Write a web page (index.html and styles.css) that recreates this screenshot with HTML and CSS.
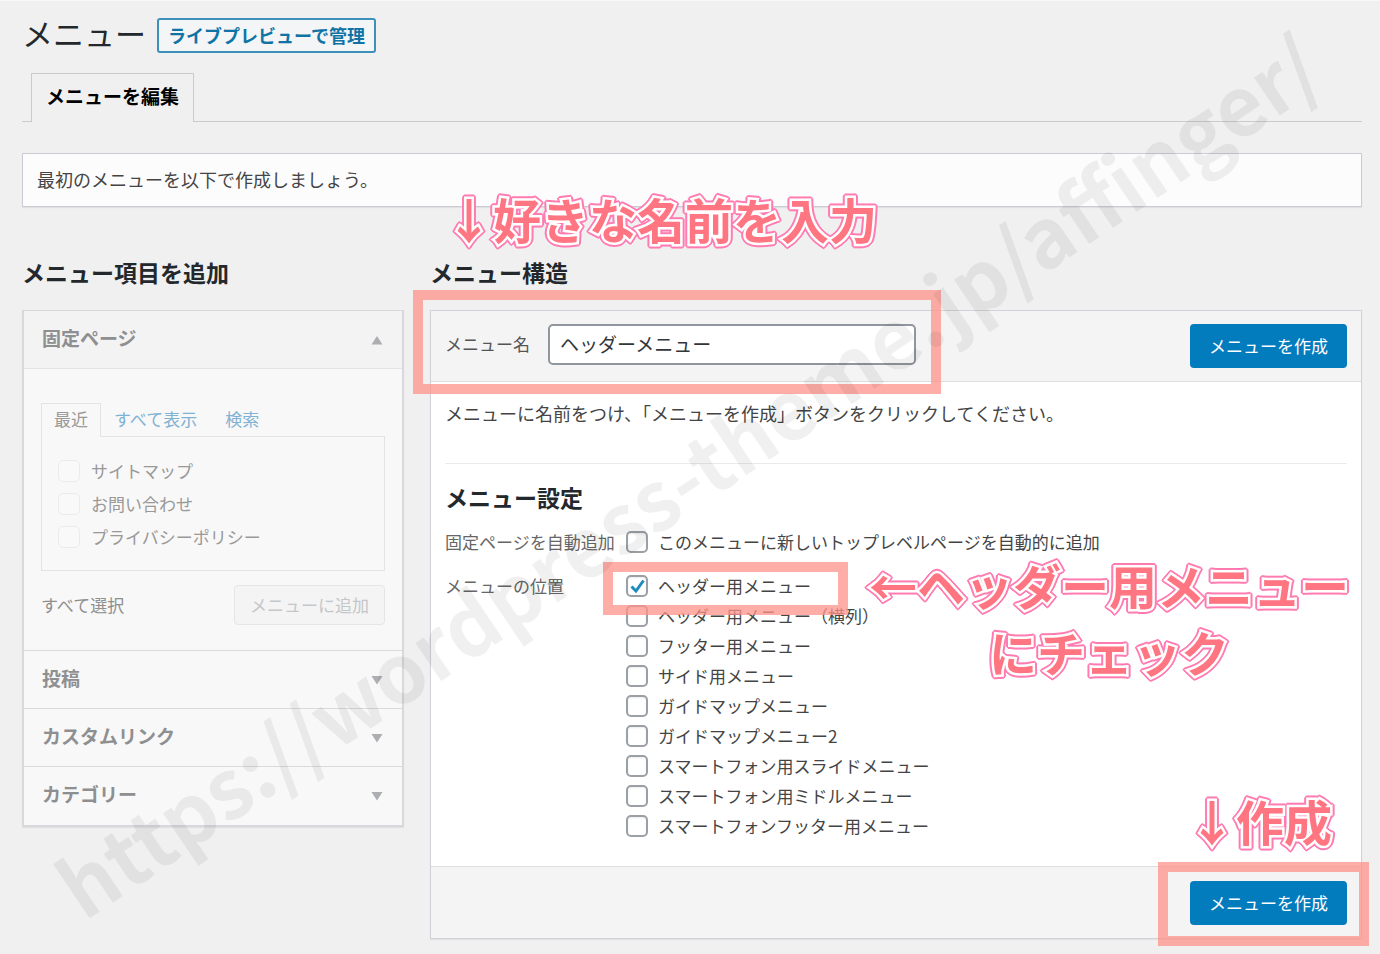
FILE: index.html
```html
<!DOCTYPE html>
<html lang="ja">
<head>
<meta charset="utf-8">
<meta name="viewport" content="width=device-width, initial-scale=1">
<title>メニュー</title>
<link rel="stylesheet" href="styles.css">
</head>
<body>
<div class="page">
  <header class="page-head">
    <h1 class="page-title">メニュー</h1>
    <a class="preview-link" href="#">ライブプレビューで管理</a>
  </header>
  <nav class="tabs"><a class="tab" href="#">メニューを編集</a></nav>
  <p class="notice">最初のメニューを以下で作成しましょう。</p>

  <div class="columns">
    <aside class="sidebar">
      <h2 class="heading">メニュー項目を追加</h2>
      <div class="accordion">
        <section class="group">
          <h3><button class="group-head open" type="button">固定ページ<svg class="caret" viewBox="0 0 12 10"><path d="M6 1 L11.5 9.5 H.5 Z"/></svg></button></h3>
          <div class="group-body">
            <div class="subtabs">
              <a class="subtab current" href="#">最近</a>
              <a class="subtab" href="#">すべて表示</a>
              <a class="subtab" href="#">検索</a>
            </div>
            <div class="subpanel">
              <label class="item"><input class="check" type="checkbox" disabled>サイトマップ</label>
              <label class="item"><input class="check" type="checkbox" disabled>お問い合わせ</label>
              <label class="item"><input class="check" type="checkbox" disabled>プライバシーポリシー</label>
            </div>
            <div class="group-actions">
              <a class="select-all" href="#">すべて選択</a>
              <button class="add" type="button" disabled>メニューに追加</button>
            </div>
          </div>
        </section>
        <section class="group"><h3><button class="group-head" type="button">投稿<svg class="caret" viewBox="0 0 12 10"><path d="M6 9.5 L11.5 1 H.5 Z"/></svg></button></h3></section>
        <section class="group"><h3><button class="group-head" type="button">カスタムリンク<svg class="caret" viewBox="0 0 12 10"><path d="M6 9.5 L11.5 1 H.5 Z"/></svg></button></h3></section>
        <section class="group"><h3><button class="group-head" type="button">カテゴリー<svg class="caret" viewBox="0 0 12 10"><path d="M6 9.5 L11.5 1 H.5 Z"/></svg></button></h3></section>
      </div>
    </aside>

    <main class="main">
      <h2 class="heading">メニュー構造</h2>
      <form class="editor">
        <div class="editor-head">
          <label class="name-label" for="menu-name">メニュー名</label>
          <input class="name-input" id="menu-name" type="text" value="ヘッダーメニュー">
          <button class="create" type="button">メニューを作成</button>
          <span class="frame frame-name"></span>
          <span class="callout callout-name">↓好きな名前を入力</span>
        </div>
        <div class="editor-body">
          <p class="lead">メニューに名前をつけ、「メニューを作成」ボタンをクリックしてください。</p>
          <h2 class="heading settings-title">メニュー設定</h2>
          <div class="setting">
            <span class="setting-name">固定ページを自動追加</span>
            <div class="options">
              <label class="option"><input class="check" type="checkbox">このメニューに新しいトップレベルページを自動的に追加</label>
            </div>
          </div>
          <div class="setting">
            <span class="setting-name">メニューの位置</span>
            <div class="options">
              <label class="option"><input class="check" type="checkbox" checked><svg class="tick" viewBox="0 0 22 22"><path d="M5.5 11.5 L10 16 L17.5 5.5"/></svg>ヘッダー用メニュー</label>
              <label class="option"><input class="check" type="checkbox">ヘッダー用メニュー（横列）</label>
              <label class="option"><input class="check" type="checkbox">フッター用メニュー</label>
              <label class="option"><input class="check" type="checkbox">サイド用メニュー</label>
              <label class="option"><input class="check" type="checkbox">ガイドマップメニュー</label>
              <label class="option"><input class="check" type="checkbox">ガイドマップメニュー2</label>
              <label class="option"><input class="check" type="checkbox">スマートフォン用スライドメニュー</label>
              <label class="option"><input class="check" type="checkbox">スマートフォン用ミドルメニュー</label>
              <label class="option"><input class="check" type="checkbox">スマートフォンフッター用メニュー</label>
              <span class="frame frame-location"></span>
              <div class="callout callout-location"><span>←ヘッダー用メニュー</span><span>にチェック</span></div>
            </div>
          </div>
        </div>
        <div class="editor-foot">
          <button class="create" type="button">メニューを作成</button>
          <span class="frame frame-create"></span>
          <span class="callout callout-create">↓作成</span>
        </div>
      </form>
    </main>
  </div>
  <div class="watermark">https://wordpress-theme.jp/affinger/</div>
</div>
</body>
</html>
```
FILE: styles.css
```css
* { box-sizing: border-box; }

body {
  margin: 0;
  background: #f0f0f0;
  color: #444;
  font: 17px/24px "Noto Sans CJK JP", sans-serif;
}

h1, h2, h3, p { margin: 0; }
a { text-decoration: none; color: inherit; }
button, input { font: inherit; color: inherit; margin: 0; }

.page {
  position: relative;
  overflow: hidden;
  padding: 17px 18px 14px 22px;
  border-top: 1px solid #f8f8f8;
}

.page-head { display: flex; align-items: flex-start; gap: 11px; }
.page-title { font-size: 31px; line-height: 30px; font-weight: 400; color: #23282d; }
.preview-link {
  padding: 4px 9px;
  border: 2px solid #3d90b8;
  border-radius: 3px;
  background: #f3f5f6;
  color: #0f73a5;
  font-size: 18px;
  line-height: 23px;
  font-weight: 700;
}

.tabs { display: flex; margin-top: 20px; padding-left: 9px; border-bottom: 1px solid #cbcbcc; }
.tab {
  margin-bottom: -1px;
  padding: 9px 14px 13px;
  border: 1px solid #cbcbcc;
  border-bottom: 0;
  background: #f0f0f0;
  color: #000;
  font-size: 19px;
  line-height: 26px;
  font-weight: 700;
}

.notice {
  margin-top: 31px;
  padding: 13px 14px 15px;
  border: 1px solid #c9cdd3;
  box-shadow: 0 1px 1px rgba(0, 0, 0, .06);
  background: #fcfcfc;
  font-size: 18px;
  line-height: 24px;
}

.columns { display: flex; align-items: flex-start; gap: 26px; margin-top: 49px; }
.sidebar { flex: 0 0 382px; }
.main { flex: 1; min-width: 0; }
.heading { font-size: 23px; line-height: 32px; font-weight: 700; color: #23282d; }

.accordion {
  margin-top: 22px;
  padding-bottom: 1px;
  border: 2px solid #d7d9dc;
  border-top-width: 1px;
  box-shadow: 0 1px 1px rgba(0, 0, 0, .06);
  background: #f8f8f8;
  color: #999;
}
.group + .group { border-top: 1px solid #d9dadc; }
.group-head {
  display: flex;
  justify-content: space-between;
  align-items: center;
  width: 100%;
  padding: 13px 19px 17px 18px;
  border: 0;
  background: none;
  color: #8e8f91;
  font-size: 19px;
  line-height: 27px;
  font-weight: 700;
  text-align: left;
}
.group-head.open { background: #f3f3f3; border-bottom: 1px solid #e3e4e5; }
.caret { width: 12px; height: 10px; fill: #acaeb1; margin-top: 4px; }
.group-body { padding: 34px 17px 25px; }
.subtabs { display: flex; }
.subtab { padding: 4px 15px 5px 13px; color: #7fb2d3; }
.subtab.current {
  position: relative;
  margin-bottom: -1px;
  padding: 3px 12px 6px;
  border: 1px solid #e3e3e3;
  border-bottom: 0;
  background: #f8f8f8;
  color: #999;
}
.subpanel { padding: 17px 16px; border: 1px solid #e3e3e3; }
.item { display: flex; align-items: center; gap: 11px; height: 33px; }
.check {
  appearance: none;
  flex: none;
  width: 22px;
  height: 22px;
  border: 2px solid #9aa0a6;
  border-radius: 5px;
  background: #fff;
  box-shadow: inset 0 1px 2px rgba(0, 0, 0, .08);
}
.item .check { border: 1px solid #ebebeb; background: #f9f9f9; box-shadow: none; }
.group-actions { display: flex; justify-content: space-between; align-items: center; margin-top: 14px; }
.select-all { color: #8f8f8f; }
.add {
  padding: 7px 15px;
  border: 1px solid #e4e5e6;
  border-radius: 4px;
  background: #f4f4f4;
  color: #c4c7ca;
}

.editor { margin-top: 22px; border: 1px solid #d0d2d7; box-shadow: 0 1px 1px rgba(0, 0, 0, .06); background: #fff; }
.editor-head, .editor-foot {
  position: relative;
  display: flex;
  align-items: flex-start;
  padding: 13px 14px;
  background: #f4f4f4;
}
.editor-head { border-bottom: 1px solid #ddd; }
.editor-foot { justify-content: flex-end; margin-top: 25px; padding: 14px 14px 13px; border-top: 1px solid #ddd; }
.name-label { width: 103px; line-height: 40px; color: #555; }
.name-input {
  flex: 0 1 368px;
  min-width: 0;
  height: 41px;
  padding: 0 10px 3px;
  border: 2px solid #8f969d;
  border-radius: 5px;
  background: #fff;
  color: #32373c;
  font-size: 19px;
}
.create {
  height: 44px;
  padding: 0 19px;
  border: 0;
  border-radius: 4px;
  background: #037cbe;
  color: #fff;
}
.editor-head .create { margin-left: auto; }

.editor-body { padding: 19px 14px 0; }
.lead { padding-bottom: 38px; border-bottom: 1px solid #eaeaea; font-size: 18px; line-height: 24px; }
.settings-title { margin-top: 17px; }
.setting { display: flex; padding-top: 14px; }
.setting-name { flex: 0 0 181px; line-height: 30px; color: #666; }
.options { position: relative; flex: 1; }
.option { position: relative; display: flex; align-items: center; gap: 10px; height: 30px; }
.tick { position: absolute; left: 0; top: 4px; width: 22px; height: 22px; fill: none; stroke: #1e8cbe; stroke-width: 3; }

/* Highlight frames and notes laid over the form */
.frame { position: absolute; border: 10px solid rgba(255, 145, 138, .75); pointer-events: none; }
.frame-name { left: -18px; top: -21px; width: 528px; height: 104px; }
.frame-location { left: -23px; top: -9px; width: 245px; height: 53px; }
.frame-create { right: -8px; top: -5px; width: 211px; height: 84px; }

.callout {
  position: absolute;
  color: #ff7582;
  font-size: 48px;
  line-height: 48px;
  font-weight: 700;
  white-space: nowrap;
  -webkit-text-stroke: 5px #fff;
  paint-order: stroke fill;
  stroke-linejoin: round;
  filter: drop-shadow(1px 1px 0 #ff7bb0) drop-shadow(-1px -1px 0 #ff7bb0)
    drop-shadow(1px -1px 0 #ff7bb0) drop-shadow(-1px 1px 0 #ff7bb0);
  pointer-events: none;
}
.callout-name { left: 14px; top: -117px; }
.callout-location {
  right: -2px;
  top: -11px;
  display: flex;
  flex-direction: column;
  align-items: center;
  gap: 19px;
}
.callout-create { right: 29px; top: -71px; }

.watermark {
  position: absolute;
  left: 97px;
  top: 824px;
  color: rgba(0, 0, 0, .06);
  font-size: 82px;
  line-height: 116px;
  font-weight: 700;
  white-space: nowrap;
  transform: rotate(-34deg);
  transform-origin: 0 100%;
  pointer-events: none;
}
```
